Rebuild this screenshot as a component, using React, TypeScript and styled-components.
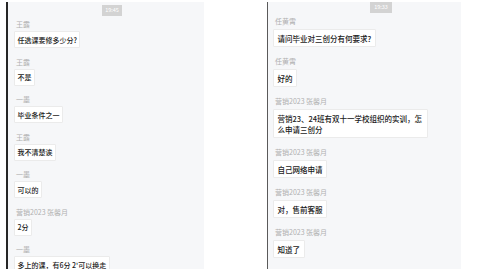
import React from "react";
import styled, { createGlobalStyle } from "styled-components";

const Global = createGlobalStyle`
  html, body { margin: 0; padding: 0; background: #ffffff; }
  body { font-family: "Noto Sans CJK SC", "Noto Sans", sans-serif; }
`;

const Page = styled.div`
  display: flex;
  align-items: flex-start;
  padding-top: 2px;
  width: 478px;
  height: 278px;
  box-sizing: border-box;
`;

type PanelProps = { $w: number; $border: number; $borderColor: string; $ml: number; $pl: number };

const Panel = styled.div<PanelProps>`
  box-sizing: border-box;
  width: ${(p) => p.$w}px;
  height: 267px;
  margin-left: ${(p) => p.$ml}px;
  border-left: ${(p) => p.$border}px solid ${(p) => p.$borderColor};
  background: #f6f7f9;
  overflow: hidden;
  padding-left: ${(p) => p.$pl}px;
  display: flex;
  flex-direction: column;
  align-items: flex-start;
`;

const TimeBadge = styled.div<{ $left: number; $top: number; $w: number }>`
  margin-left: ${(p) => p.$left}px;
  margin-top: ${(p) => p.$top}px;
  width: ${(p) => p.$w}px;
  height: 11px;
  background: #d3d3d3;
  color: #ffffff;
  font-size: 5.5px;
  line-height: 11px;
  text-align: center;
`;

const Message = styled.div<{ $gap: number; $nameGap: number }>`
  display: flex;
  flex-direction: column;
  align-items: flex-start;
  margin-top: ${(p) => p.$gap}px;
  gap: ${(p) => p.$nameGap}px;
`;

const Name = styled.div<{ $size: number }>`
  font-size: ${(p) => p.$size}px;
  line-height: 10px;
  height: 10px;
  color: #b0b0b0;
  padding-left: 2px;
  white-space: nowrap;
`;

const Bubble = styled.div<{ $size: number; $lh: number; $px: number }>`
  box-sizing: border-box;
  background: #ffffff;
  border: 1px solid #ebebeb;
  border-radius: 1px;
  font-size: ${(p) => p.$size}px;
  line-height: ${(p) => p.$lh}px;
  padding: ${(p) => (17 + (p.$lh - 10) - p.$lh) / 2 - 1}px ${(p) => p.$px - 1}px;
  color: #1a1a1a;
  font-weight: 500;
  max-width: 155px;
`;

type Msg = { name: string; text: string };

const leftMsgs: Msg[] = [
  { name: "王露", text: "任选课要修多少分?" },
  { name: "王露", text: "不是" },
  { name: "一墨", text: "毕业条件之一" },
  { name: "王露", text: "我不清楚诶" },
  { name: "一墨", text: "可以的" },
  { name: "营销2023 张馨月", text: "2分" },
  { name: "一墨", text: "多上的课，有6分 2'可以换走" },
];

const rightMsgs: Msg[] = [
  { name: "任黄霄", text: "请问毕业对三创分有何要求?" },
  { name: "任黄霄", text: "好的" },
  { name: "营销2023 张馨月", text: "营销23、24班有双十一学校组织的实训，怎么申请三创分" },
  { name: "营销2023 张馨月", text: "自己网络申请" },
  { name: "营销2023 张馨月", text: "对，售前客服" },
  { name: "营销2023 张馨月", text: "知道了" },
];

export default function App() {
  return (
    <>
      <Global />
      <Page>
        <Panel $w={198} $border={2} $borderColor="#262626" $ml={6} $pl={6}>
          <TimeBadge $left={88} $top={3} $w={20}>19:45</TimeBadge>
          {leftMsgs.map((m, i) => (
            <Message key={i} $gap={i === 0 ? 3 : 8.5} $nameGap={2}>
              <Name $size={7}>{m.name}</Name>
              <Bubble $size={7} $lh={10} $px={3.5}>{m.text}</Bubble>
            </Message>
          ))}
        </Panel>
        <Panel $w={194} $border={1} $borderColor="#5a5a5a" $ml={63} $pl={5}>
          <TimeBadge $left={97} $top={0} $w={22}>19:33</TimeBadge>
          {rightMsgs.map((m, i) => (
            <Message key={i} $gap={i === 0 ? 3 : 9} $nameGap={3}>
              <Name $size={7}>{m.name}</Name>
              <Bubble $size={7.5} $lh={11} $px={4.5}>{m.text}</Bubble>
            </Message>
          ))}
        </Panel>
      </Page>
    </>
  );
}
